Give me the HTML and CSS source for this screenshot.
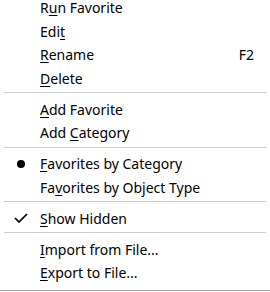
FILE: index.html
```html
<!DOCTYPE html>
<html lang="en">
<head>
    <meta charset="UTF-8">
    <meta name="viewport" content="width=device-width, initial-scale=1.0">
    <title>Favorites Menu</title>
    <link rel="stylesheet" href="styles.css">
</head>
<body>
    <ul class="menu">
        <li class="item"><span class="mark"></span><span class="label">R<u>u</u>n Favorite</span></li>
        <li class="item"><span class="mark"></span><span class="label">Edi<u>t</u></span></li>
        <li class="item"><span class="mark"></span><span class="label"><u>R</u>ename</span><span class="key">F2</span></li>
        <li class="item"><span class="mark"></span><span class="label"><u>D</u>elete</span></li>
        <li class="sep"></li>
        <li class="item"><span class="mark"></span><span class="label"><u>A</u>dd Favorite</span></li>
        <li class="item"><span class="mark"></span><span class="label">Add <u>C</u>ategory</span></li>
        <li class="sep"></li>
        <li class="item"><span class="mark"><span class="bullet"></span></span><span class="label"><u>F</u>avorites by Category</span></li>
        <li class="item"><span class="mark"></span><span class="label">Fa<u>v</u>orites by Object Type</span></li>
        <li class="sep"></li>
        <li class="item">
            <span class="mark">
                <svg width="14" height="10" viewBox="0 0 14 10"><path d="M1 5 L5 9 L13 1" fill="none" stroke="#000" stroke-width="1.7"/></svg>
            </span>
            <span class="label"><u>S</u>how Hidden</span>
        </li>
        <li class="sep"></li>
        <li class="item"><span class="mark"></span><span class="label"><u>I</u>mport from File...</span></li>
        <li class="item"><span class="mark"></span><span class="label"><u>E</u>xport to File...</span></li>
    </ul>
</body>
</html>
```

FILE: styles.css
```css
body {
    margin: 0;
    background-color: #fff;
    font-family: "Noto Sans", Arial, sans-serif;
    font-size: 14px;
    color: #000;
}

.menu {
    list-style: none;
    margin: -4px 0 0 0;
    padding: 0 0 5px 0;
    border-bottom: 1px solid #a0a0a0;
    box-shadow: 0 1px 1px rgba(0,0,0,0.15);
}

.item {
    display: flex;
    align-items: center;
    height: 23.5px;
    padding-right: 16px;
}

.mark {
    width: 40px;
    flex-shrink: 0;
    display: flex;
    align-items: center;
    justify-content: center;
    padding-left: 1px;
    box-sizing: border-box;
}

.bullet {
    width: 8px;
    height: 8px;
    border-radius: 50%;
    background-color: #000;
}

.label {
    flex: 1;
    white-space: nowrap;
}

.label u {
    text-underline-offset: 2px;
}

.key {
    white-space: nowrap;
}

.sep {
    height: 1px;
    margin: 2px 4px 4.5px 4px;
    background-color: #ccc;
}
```
